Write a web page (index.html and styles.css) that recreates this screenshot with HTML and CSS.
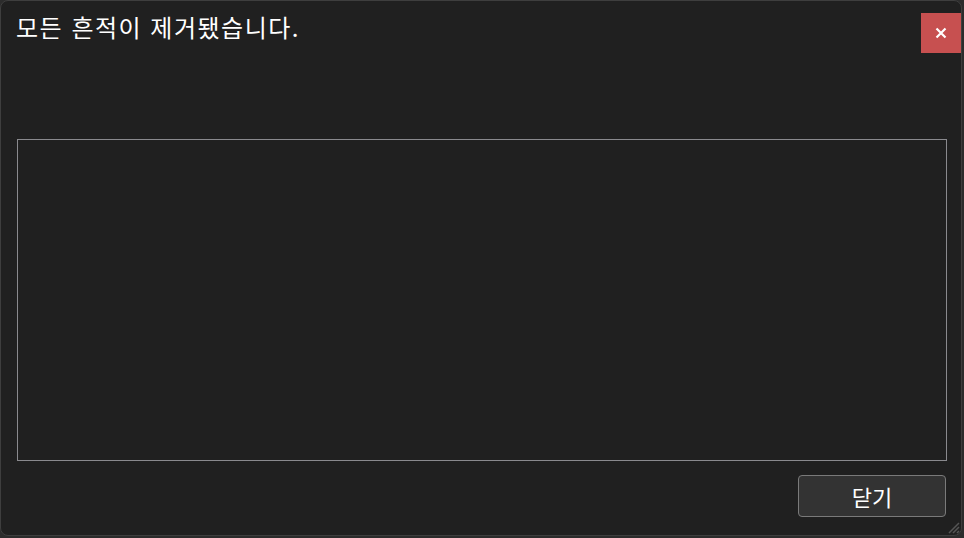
FILE: index.html
```html
<!DOCTYPE html>
<html lang="ko">
<head>
<meta charset="utf-8">
<link rel="stylesheet" href="styles.css">
</head>
<body>
<div class="dialog">
  <div class="header">
    <div class="title">모든 흔적이 제거됐습니다.</div>
    <button class="close" aria-label="닫기">
      <svg width="12" height="12" viewBox="0 0 12 12"><path d="M1.5 1.5 L10.5 10.5 M10.5 1.5 L1.5 10.5" stroke="#fff" stroke-width="2.2" fill="none"/></svg>
    </button>
  </div>
  <div class="log"></div>
  <div class="footer">
    <button class="btn">닫기</button>
  </div>
  <svg class="grip" width="14" height="14" viewBox="0 0 14 14"><path d="M13 3 L3 13 M13 7 L7 13 M13 11 L11 13" stroke="#555" stroke-width="1.5" fill="none"/></svg>
</div>
</body>
</html>
```
FILE: styles.css
```css
html, body {
  margin: 0;
  padding: 0;
  background: #2c2c2c;
  width: 964px;
  height: 538px;
  overflow: hidden;
}
.dialog {
  position: relative;
  box-sizing: border-box;
  width: 962px;
  height: 536px;
  background: #202020;
  border: 1px solid #3e3e3e;
  border-radius: 8px;
  display: flex;
  flex-direction: column;
  font-family: "Noto Sans CJK KR", "Noto Sans", sans-serif;
  color: #fff;
}
.header {
  height: 138px;
  display: flex;
  justify-content: space-between;
  align-items: flex-start;
}
.title {
  margin: 9px 0 0 15px;
  font-size: 24px;
  letter-spacing: 1.5px;
  line-height: 34px;
}
.close {
  margin: 12px 0 0 0;
  width: 40px;
  height: 40px;
  border: none;
  padding: 0;
  background: #c75050;
  display: flex;
  align-items: center;
  justify-content: center;
}
.log {
  box-sizing: border-box;
  margin-left: 16px;
  width: 930px;
  height: 322px;
  border: 1px solid #8a8a8e;
}
.footer {
  margin-left: 16px;
  width: 929px;
  margin-top: 14px;
  display: flex;
  justify-content: flex-end;
}
.btn {
  box-sizing: border-box;
  width: 148px;
  height: 42px;
  background: #333333;
  border: 1px solid #7a7a7a;
  border-radius: 4px;
  color: #fff;
  font-family: "Noto Sans CJK KR", "Noto Sans", sans-serif;
  font-size: 22px;
  line-height: 1;
  padding: 0;
}
.grip {
  position: absolute;
  right: 1px;
  bottom: 1px;
}
```
